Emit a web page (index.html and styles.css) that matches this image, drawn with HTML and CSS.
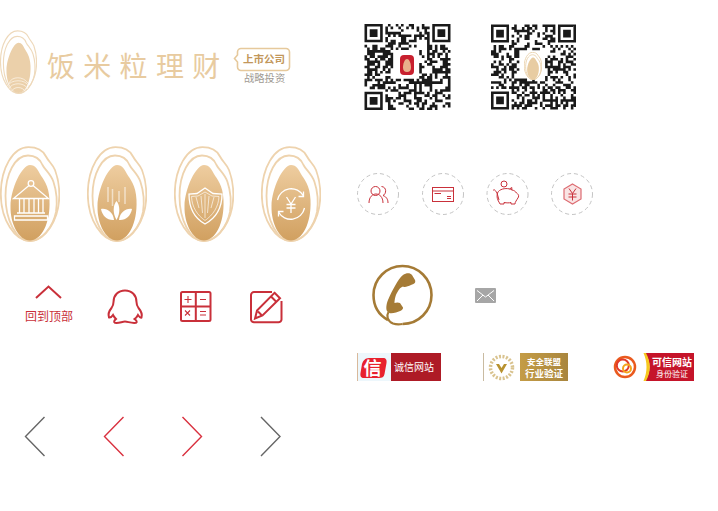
FILE: index.html
```html
<!DOCTYPE html>
<html lang="zh">
<head>
<meta charset="utf-8">
<title>饭米粒理财</title>
<link rel="stylesheet" href="styles.css">
</head>
<body>
<svg class="defs" width="0" height="0" aria-hidden="true">
  <defs>
    <linearGradient id="grainFill" x1="0" y1="0" x2="0" y2="1">
      <stop offset="0" stop-color="#eecda0"/>
      <stop offset="1" stop-color="#d1a060"/>
    </linearGradient>
    <symbol id="grain" viewBox="0 0 60 96" preserveAspectRatio="none">
      <path class="grain-line" d="M28.500 1.200C37 1.200 43 4.500 46 10.500 48.500 15.500 52.500 18 55 24 58 32 59.500 40 59.300 50 59 74 45 95 30 95 15 95 .8 74 .8 48 .8 22 13 1.200 28.500 1.200Z"/>
      <path class="grain-line" d="M28 9.500C35 9.500 40 13 42.500 19 45 24 51 28 53.500 36 56.500 45 57.500 56 56 66 53 81 42 95 30 95 16 95 5.500 74 5.500 50 5.500 28 15 9.500 28 9.500Z"/>
      <path class="grain-core" d="M30 19C35.500 19 38 24 40 28 43 33 49 39 49.500 54 50.500 78 41 94.500 30 94.500 19 94.500 10 78 10.500 60 11 42 22 19 30 19Z"/>
    </symbol>
  </defs>
</svg>

<main class="sheet">
  <svg class="sprite logo-grain"><use href="#grain" width="37" height="64"/></svg>
  <svg class="sprite logo-rings" viewBox="0 0 37 64">
    <path d="M9 53C12 46 23 46 28 53M7.500 56C11 49 25 49 29 56M8.500 59C12 52 24 52 28 59M11 62C14 56 22 56 26 62"/>
  </svg>
  <div class="sprite logo-name">饭米粒理财</div>
  <svg class="sprite logo-tag" viewBox="0 0 58 26">
    <path d="M8 2.500H53A3.500 3.500 0 0 1 56.500 6V21A3.500 3.500 0 0 1 53 24.500H8A3.500 3.500 0 0 1 4.500 21V16L1.500 12.500 4.500 9V6A3.500 3.500 0 0 1 8 2.500Z"/>
  </svg>
  <div class="sprite logo-listed">上市公司</div>
  <div class="sprite logo-invest">战略投资</div>

  <svg class="sprite qr qr-red" data-seed="17" viewBox="0 0 33 33"><path class="qr-cells"/></svg>
  <svg class="sprite qr-mark-red" viewBox="0 0 14 20">
    <rect width="14" height="20" rx="4"/>
    <path d="M7 4C9.500 4 11 9 11 12.500 11 15.500 9.500 17 7 17 4.500 17 3 15.500 3 12.500 3 9 4.500 4 7 4Z"/>
  </svg>
  <svg class="sprite qr qr-gold" data-seed="91" viewBox="0 0 33 33"><path class="qr-cells"/></svg>
  <svg class="sprite qr-mark-gold"><use href="#grain" width="18" height="28"/></svg>

  <svg class="sprite grain-icon grain-a" viewBox="0 0 60 96">
    <use href="#grain" width="60" height="96"/>
    <g class="glyph">
      <circle cx="31" cy="37.500" r="2.800"/>
      <path d="M29 39.500 13.500 52.500H48.500L33 39.500M19.500 52.500V67M24 52.500V67M29 52.500V67M34 52.500V67M38.500 52.500V67M43 52.500V67M17 67H45M14.500 70H47.500V74H14.500Z"/>
    </g>
  </svg>
  <svg class="sprite grain-icon grain-b" viewBox="0 0 60 96">
    <use href="#grain" width="60" height="96"/>
    <g class="glyph glyph-soft">
      <path d="M21 41V56M25.500 43V60M32 45V56M38 41V58"/>
    </g>
    <g class="glyph-fill">
      <path d="M29.500 55C33 59 33.500 67 29.500 74 25.500 67 26 59 29.500 55Z"/>
      <path d="M14 63C20 62 26 66 27 74 20 74.500 15.500 70 14 63Z"/>
      <path d="M45 63C39 62 33 66 32 74 39 74.500 43.500 70 45 63Z"/>
    </g>
  </svg>
  <svg class="sprite grain-icon grain-c" viewBox="0 0 60 96">
    <use href="#grain" width="60" height="96"/>
    <g class="glyph">
      <path d="M31 42 39 47.500 48 48C48 62 42 72 31 78 20 72 15 62 15 48L23 47.500Z"/>
      <path class="thin" d="M31 46 38 50 45 50.500C44.500 61 39 69 31 74.500 23 69 18 61 17.500 50.500L24 50Z"/>
      <path class="thin" d="M22 51 25 62M27 50 28.500 67M31 48V72M35 50 33.500 67M40 51 37 62"/>
    </g>
  </svg>
  <svg class="sprite grain-icon grain-d" viewBox="0 0 60 96">
    <use href="#grain" width="60" height="96"/>
    <g class="glyph">
      <path d="M16.500 54A14 14 0 0 1 42.500 50M43.500 62A14 14 0 0 1 17.500 66M42.500 45.500V50.500H37.500M17.500 70.500V65.500H22.500"/>
      <path d="M25.500 51 30 58 34.500 51M30 58V67M25.500 58.500H34.500M25.500 62H34.500"/>
    </g>
  </svg>

  <svg class="sprite canvas-icons" viewBox="0 260 330 70">
    <g class="red-line">
      <path class="up" d="M36 298 48.500 286.500 61 298"/>
      <path d="M125 290.500C118 290.500 113.500 295.500 113.500 302 113.500 304.500 113 306 111.500 308 109 311 108 314.500 109 317.500 110.500 318 112 316.500 113 315 114 317 115 318 116 319 114 320.500 113.500 322 115 322.800 119 323.500 122 321.500 125 321.500 128 321.500 131 323.500 136 322.800 137.500 322 136.500 320.500 134.500 319 136 318 137 317 138 315 139 316.500 140.500 318 141.500 317.500 142.500 314.500 141 311 138.500 308 137 306 136.500 304 136.500 302 136.500 295.500 132 290.500 125 290.500Z"/>
      <rect x="181" y="292" width="29.500" height="29" rx="1.500"/>
      <path d="M195.800 292V321M181 306.500H210.500"/>
      <path class="fine" d="M184.500 299.500H191.500M188 296V303M200 299.500H206M185 310.500 190 315.500M190 310.500 185 315.500M200 311.500H206M200 315H206"/>
      <path d="M272 292H254C252.500 292 251 293.500 251 295V319.500C251 321 252.500 322.300 254 322.300H278.500C280 322.300 281.500 321 281.500 319.500V301"/>
      <path d="M274.500 292.800 280 298.300 262.500 315.500 255 318.500 257 310.500ZM271 296.500 276.500 302M258 311.500 261.500 315"/>
    </g>
  </svg>

  <svg class="sprite phone" viewBox="370 262 66 66">
    <path class="phone-ring" d="M388 320C378 314.500 373.500 305 373.500 295A29 29 0 1 1 402.500 324"/>
    <path class="phone-body" d="M403 275C398 279 392 291 388 300 386 305 386 309 387 311 389 314 392 313.500 396 312.500 400 311.500 403.500 309.500 403 307.500L400 303C398 302 396 302.500 394.500 303 394.500 299 396 294 397.500 292 399 289 401 287 403 286.500 405 288 408 286 411 285 414 284 416 283 415 280L412 275C410 272.500 406 273 403 275Z"/>
    <path class="phone-cord" d="M388.500 312C386 316 387.500 321 393 323.500 396 324.500 399 324.500 402.500 324"/>
  </svg>

  <div class="sprite back-label">回到顶部</div>

  <svg class="sprite round-row" viewBox="355 170 240 48">
    <g class="dashed">
      <circle cx="378" cy="194" r="20.500"/>
      <circle cx="443" cy="194" r="20.500"/>
      <circle cx="507.500" cy="194" r="20.500"/>
      <circle cx="572" cy="194" r="20.500"/>
    </g>
    <g class="round-line">
      <circle cx="375.500" cy="191" r="4.500"/>
      <path d="M369 203C369 191 383 191 383 203M381.500 186.500C387 187 386.500 194 383 195.500 387 197 388 200 388 203"/>
      <rect x="432.500" y="187.500" width="21" height="14"/>
      <path d="M432.500 191H453.500M434.500 193.500H441M447 196.500H451M447 198.500H451"/>
      <circle cx="504" cy="184" r="3"/>
      <path d="M497 193C495 190 494.500 189 493 190.500M497.500 193C496 199 499 201.500 500 204H504V202.500C507 203 509 203 511 202.500V204H515C515 202 516.500 200.500 518.500 197 519 195 518 194 516.500 193 515.500 191.500 514.500 190.500 512 190 509 188 503 188 499.500 190.500 498.500 191 498 192 497.500 193ZM509.500 189 511.800 187.500V190M497 193 499 200"/>
      <path class="hex" d="M572.500 184 581 189V199L572.500 204 564 199V189Z"/>
      <path d="M569 188.500 572.500 193.500 576 188.500M572.500 193.500V200.500M568.500 194H576.500M568.500 197H576.500"/>
    </g>
  </svg>

  <svg class="sprite mail" viewBox="0 0 21 15">
    <rect width="21" height="15" rx="1"/>
    <path d="M2 2.500 10.500 9 19 2.500M2 13 8 7M19 13 13 7"/>
  </svg>

  <div class="sprite badge badge-one">
    <svg class="badge-mark" viewBox="0 0 33 28">
      <rect width="33" height="28"/>
      <path d="M4 11C5 8 7 5 11 5H25C28 5 29 7 28.500 10L26.500 21C26 24 24 25 21 25H6C3 25 2 23 2.500 20Z"/>
      <text class="badge-xin" x="5.500" y="22">信</text>
    </svg>
    <span class="badge-red">诚信网站</span>
  </div>

  <div class="sprite badge badge-two">
    <svg class="badge-wreath" viewBox="0 0 36 28">
      <circle cx="17.500" cy="14.500" r="11"/>
      <path d="M12 11 17.500 20.500 23 11H20L17.500 15 15 11Z"/>
    </svg>
    <span class="badge-gold"><b>安全联盟</b><b>行业验证</b></span>
  </div>

  <div class="sprite badge badge-three">
    <svg class="badge-swirl" viewBox="0 0 42 28">
      <path class="gap" d="M35 0C41 9 41 19 35 28Z"/>
      <path class="crescent" d="M33.500 0H36C41 9 41 19 36 28H33.500C37.500 19 37.500 9 33.500 0Z"/>
      <circle class="o" cx="15" cy="14" r="10"/>
      <circle class="r" cx="12.800" cy="12.500" r="6"/>
      <circle class="y" cx="17" cy="15.500" r="4"/>
    </svg>
    <span class="badge-crimson"><b>可信网站</b><i>身份验证</i></span>
  </div>

  <svg class="sprite chevrons" viewBox="20 412 266 50">
    <path class="grey" d="M44.500 417 25.500 436.500 44.500 456"/>
    <path class="red" d="M123.500 417 104.500 436.500 123.500 456"/>
    <path class="red" d="M182.500 417 201.500 436.500 182.500 456"/>
    <path class="grey" d="M261 417 280 436.500 261 456"/>
  </svg>
</main>
<script src="qr.js"></script>
</body>
</html>
```

FILE: styles.css
```css
html, body { margin: 0; padding: 0; background: #fff; }
body { font-family: "Noto Sans CJK SC", "Liberation Sans", sans-serif; overflow: hidden; }
.defs { position: absolute; }
.sheet { position: relative; width: 718px; height: 511px; }
.sprite { position: absolute; display: block; }

.grain-line { fill: none; stroke: var(--grain-line, #eed3ae); stroke-width: var(--grain-stroke, 1.800); }
.grain-core { fill: var(--grain-core, url(#grainFill)); }

.logo-grain { left: 0; top: 30px; width: 37px; height: 64px; --grain-line: #eed9bb; --grain-core: #ebd0aa; --grain-stroke: 1.800; }
.logo-rings { left: 0; top: 30px; width: 37px; height: 64px; }
.logo-rings path { fill: none; stroke: #fbf3e6; stroke-width: .8; }
.logo-name { left: 47px; top: 45px; font-size: 28px; line-height: 40px; letter-spacing: 8.300px; color: #e8cba0; white-space: nowrap; }
.logo-tag { left: 233px; top: 46px; width: 58px; height: 26px; }
.logo-tag path { fill: #fff; stroke: #e6c99c; stroke-width: 1.600; }
.logo-listed { left: 243px; top: 51px; font-size: 10.500px; line-height: 16px; color: #c2975a; white-space: nowrap; font-weight: 700; }
.logo-invest { left: 244px; top: 71px; font-size: 10.300px; line-height: 14px; color: #a09a93; white-space: nowrap; }

.qr { top: 24px; height: 86px; }
.qr-red { left: 364px; width: 87px; }
.qr-gold { left: 491px; width: 85px; }
.qr-cells { fill: #1a1a1a; }
.qr-mark-red { left: 400px; top: 55px; width: 14px; height: 20px; }
.qr-mark-red rect { fill: #c8202f; }
.qr-mark-red path { fill: #e9b08c; }
.qr-mark-gold { left: 524px; top: 52px; width: 18px; height: 28px; --grain-line: #ead2ad; --grain-core: #e8cca2; --grain-stroke: 3; }

.grain-icon { top: 146px; width: 60px; height: 96px; }
.grain-a { left: 0; }
.grain-b { left: 87px; }
.grain-c { left: 174px; }
.grain-d { left: 261px; }
.glyph, .glyph circle { fill: none; stroke: #fff; stroke-width: 1.300; }
.glyph path { fill: none; }
.glyph .thin { stroke-width: .8; stroke-opacity: .8; }
.glyph-soft { stroke-opacity: .55; stroke-width: 1.500; }
.glyph-fill { fill: #fff; }

.canvas-icons { left: 0; top: 260px; width: 330px; height: 70px; }
.red-line { fill: none; stroke: #c9303a; stroke-width: 2; }
.red-line .fine { stroke-width: 1.100; }
.phone { left: 370px; top: 262px; width: 66px; height: 66px; }
.phone-ring { fill: none; stroke: #a57b36; stroke-width: 2.600; }
.phone-body { fill: #a57b36; }
.phone-cord { fill: none; stroke: #a57b36; stroke-width: 2.200; }

.back-label { left: 25px; top: 308px; font-size: 12px; line-height: 16px; color: #c9303a; white-space: nowrap; }

.round-row { left: 355px; top: 170px; width: 240px; height: 48px; }
.dashed circle { fill: none; stroke: #c4c4c4; stroke-width: 1; stroke-dasharray: 4 3; }
.round-line { fill: none; stroke: #c9303a; stroke-width: 1; }
.round-line .hex { fill: #f9e4e4; stroke: #dd6c72; stroke-width: 1.200; }

.mail { left: 475px; top: 288px; width: 21px; height: 15px; }
.mail rect { fill: #a6a6a6; }
.mail path { fill: none; stroke: #fff; stroke-width: 1; }

.badge { top: 353px; height: 28px; width: 84px; box-sizing: border-box; display: flex; color: #fff; }
.badge-one { left: 357px; border-left: 1px solid #d9b99b; }
.badge-two { left: 483px; border-left: 1px solid #c9bba1; width: 85px; }
.badge-three { left: 610px; }
.badge-mark { width: 33px; height: 28px; flex: none; }
.badge-mark rect { fill: #edf7fc; }
.badge-mark path { fill: #e8212e; }
.badge-xin { fill: #fff; font-size: 18px; font-family: "Noto Sans CJK SC", sans-serif; font-weight: 700; }
.badge-red { flex: 1; padding-left: 3px; background: #ae1b26; font-size: 10px; line-height: 28px; white-space: nowrap; }
.badge-wreath { width: 36px; height: 28px; flex: none; }
.badge-wreath circle { fill: none; stroke: #d9c38f; stroke-width: 3.500; stroke-dasharray: 2 1.500; }
.badge-wreath path { fill: #b8922f; }
.badge-gold { flex: 1; background: linear-gradient(90deg, #c49c46, #a9863e); display: flex; flex-direction: column; align-items: center; justify-content: center; font-size: 9.500px; line-height: 12px; white-space: nowrap; }
.badge-gold b:first-child { font-size: 8.500px; line-height: 11px; }
.badge-swirl { width: 42px; height: 28px; flex: none; margin-right: -7px; position: relative; }
.badge-swirl circle { fill: none; stroke-width: 2.500; }
.badge-swirl .gap { fill: #fff; }
.badge-swirl .crescent { fill: #f6c91f; }
.badge-swirl .o { stroke: #ea5a1e; }
.badge-swirl .r { stroke: #e23a2a; stroke-width: 2; }
.badge-swirl .y { stroke: #f4a51c; stroke-width: 2; }
.badge-crimson { flex: 1; background: #c5142a; display: flex; flex-direction: column; align-items: center; justify-content: center; padding-left: 5px; font-size: 10px; line-height: 13px; white-space: nowrap; }
.badge-crimson i { font-style: normal; font-size: 8px; line-height: 11px; }

.chevrons { left: 20px; top: 412px; width: 266px; height: 50px; fill: none; stroke-width: 1.400; }
.chevrons .grey { stroke: #666; }
.chevrons .red { stroke: #d9313f; }
```

FILE: qr.js
```js
// Draws the two QR-style code patterns: finder squares plus seeded pseudo-random cells.
document.querySelectorAll('.qr').forEach(function (svg) {
  var size = 33;
  var seed = Number(svg.dataset.seed);
  function rand() {
    seed = (seed * 1664525 + 1013904223) % 4294967296;
    return seed / 4294967296;
  }
  function inFinder(x, y) {
    return (x < 8 && y < 8) || (x > 24 && y < 8) || (x < 8 && y > 24);
  }
  function finderCell(x, y) {
    var fx = x > 24 ? x - 26 : x;
    var fy = y > 24 ? y - 26 : y;
    if (fx < 0 || fy < 0 || fx > 6 || fy > 6) return false;
    return fx === 0 || fy === 0 || fx === 6 || fy === 6 || (fx > 1 && fx < 5 && fy > 1 && fy < 5);
  }
  var d = '';
  for (var y = 0; y < size; y++) {
    for (var x = 0; x < size; x++) {
      var on = inFinder(x, y) ? finderCell(x, y) : rand() > 0.5;
      if (x >= 11 && x <= 20 && y >= 10 && y <= 20) on = false;
      if (on) d += 'M' + x + ' ' + y + 'h1v1h-1z';
    }
  }
  svg.querySelector('.qr-cells').setAttribute('d', d);
});
```
